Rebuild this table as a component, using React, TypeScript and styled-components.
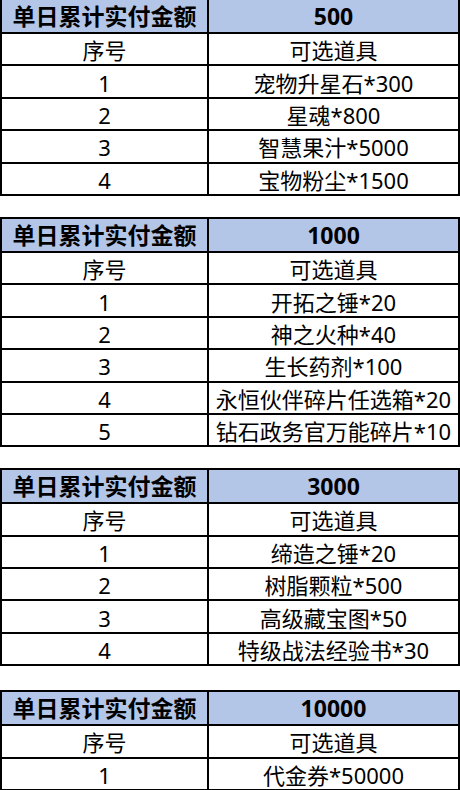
import React from 'react';
import styled, { createGlobalStyle } from 'styled-components';

const GlobalStyle = createGlobalStyle`
  html, body {
    margin: 0;
    padding: 0;
    background: #ffffff;
  }
  body {
    font-family: "Noto Sans", "Noto Sans CJK SC", sans-serif;
    color: #000;
  }
`;

interface Tier {
  amount: string;
  items: string[];
  extraSpace?: number;
}

const tiers: Tier[] = [
  { amount: '500', items: ['宠物升星石*300', '星魂*800', '智慧果汁*5000', '宝物粉尘*1500'] },
  {
    amount: '1000',
    items: ['开拓之锤*20', '神之火种*40', '生长药剂*100', '永恒伙伴碎片任选箱*20', '钻石政务官万能碎片*10'],
  },
  { amount: '3000', items: ['缔造之锤*20', '树脂颗粒*500', '高级藏宝图*50', '特级战法经验书*30'] },
  { amount: '10000', items: ['代金券*50000'], extraSpace: 3 },
];

function App() {
  return (
    <Page>
      <GlobalStyle />
      {tiers.map((tier) => (
        <Table key={tier.amount} $extraSpace={tier.extraSpace ?? 0}>
          <colgroup>
            <col style={{ width: 207 }} />
            <col />
          </colgroup>
          <thead>
            <HeadRow>
              <HeadCell>单日累计实付金额</HeadCell>
              <HeadCell>{tier.amount}</HeadCell>
            </HeadRow>
          </thead>
          <tbody>
            <Row>
              <Cell>序号</Cell>
              <Cell>可选道具</Cell>
            </Row>
            {tier.items.map((item, i) => (
              <Row key={item}>
                <Cell>{i + 1}</Cell>
                <Cell>{item}</Cell>
              </Row>
            ))}
          </tbody>
        </Table>
      ))}
    </Page>
  );
}

export default App;

const Page = styled.div`
  width: 460px;
  margin-top: -2px;
  display: flex;
  flex-direction: column;
  gap: 21px;
`;

const Table = styled.table<{ $extraSpace: number }>`
  width: 460px;
  margin-top: ${(p) => p.$extraSpace}px;
  border-collapse: collapse;
  table-layout: fixed;
  border: 2px solid #000;
`;

const HeadRow = styled.tr`
  height: 34px;
  background-color: #b4c6e7;
`;

const HeadCell = styled.th`
  border: 2px solid #000;
  padding: 0;
  padding-top: 1px;
  font-size: 23px;
  font-weight: 700;
  text-align: center;
  white-space: nowrap;
  line-height: 1;
`;

const Row = styled.tr`
  height: 32.4px;
`;

const Cell = styled.td`
  border: 2px solid #000;
  padding: 0;
  padding-top: 2px;
  font-size: 22px;
  font-weight: 400;
  text-align: center;
  white-space: nowrap;
  line-height: 1;
`;
